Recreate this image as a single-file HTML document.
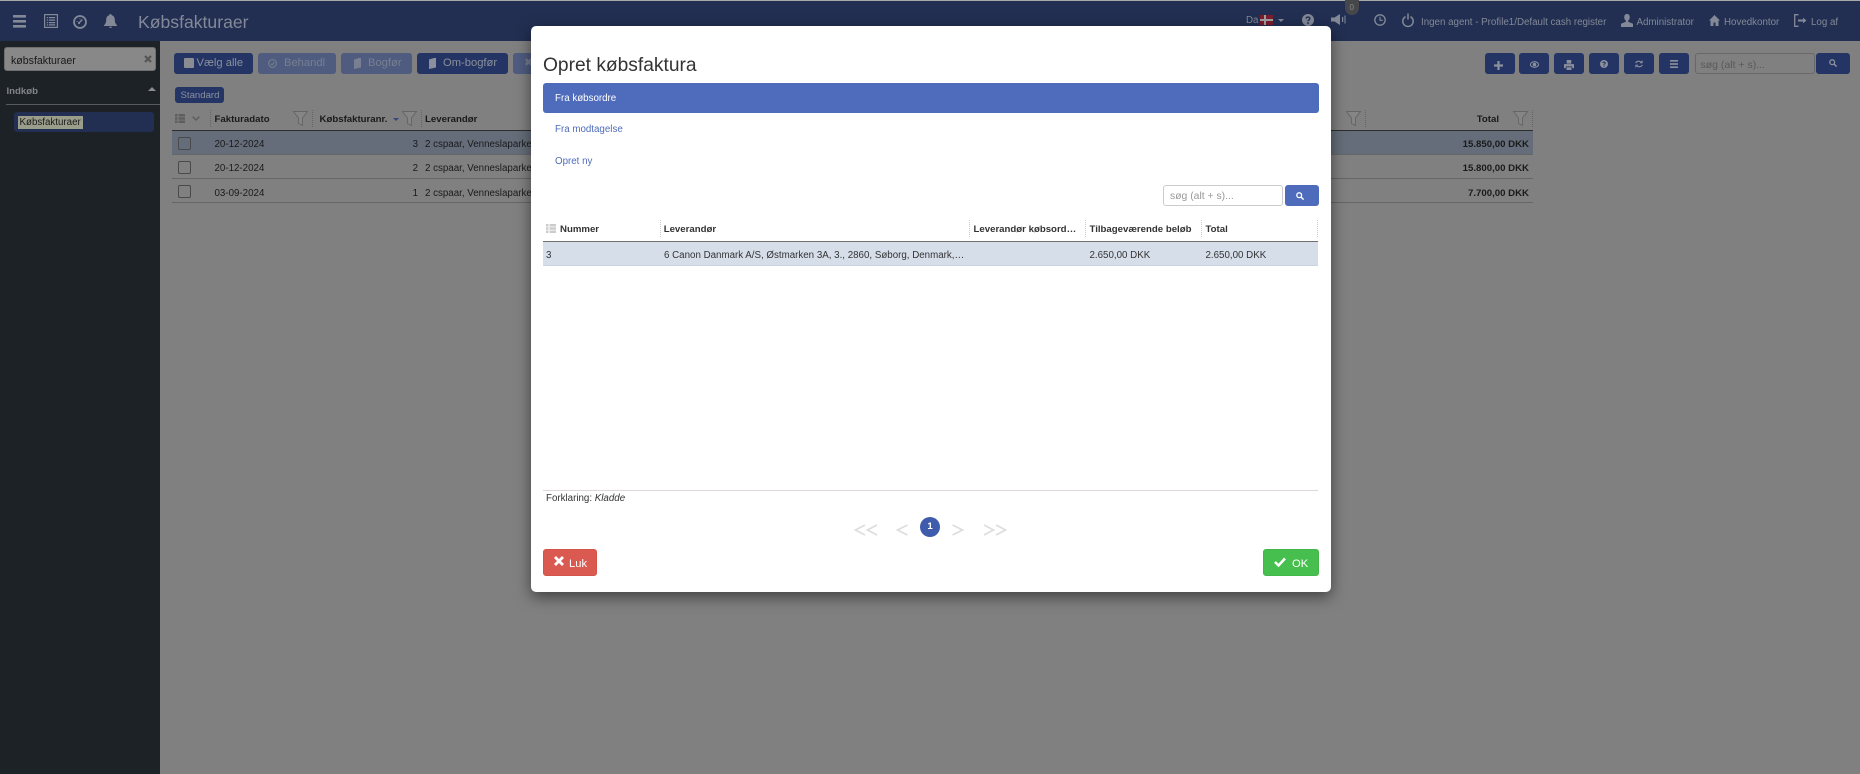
<!DOCTYPE html>
<html lang="da"><head><meta charset="utf-8"><title>Købsfakturaer</title>
<style>
html,body{margin:0;padding:0;width:1860px;height:774px;overflow:hidden;background:#808080;font-family:"Liberation Sans",Arial,sans-serif;color:#1a1a1a}
*{box-sizing:border-box}
.a{position:absolute}
.t{position:absolute;white-space:nowrap;line-height:16px;font-size:9.75px;margin-top:1px}
.b{font-weight:bold;font-size:9.65px}
.nt{color:#838997}
.btn{position:absolute;top:53px;height:21px;background:#243565;border-radius:3px;color:#8b909c;font-size:11.2px;line-height:20px;white-space:nowrap}
.dis{background:#4f5c80;color:#787f91}
.div{position:absolute;width:0;border-left:1px dotted #666}
.mdiv{position:absolute;width:0;border-left:1px dotted #ccc;top:220px;height:17px}
.rl{position:absolute;left:172px;width:1361px;height:1px;background:#666}
.cb{position:absolute;left:178px;width:13px;height:13px;border:1px solid #4a4a4a;border-radius:2px;background:#808080}
svg{position:absolute;overflow:visible}
</style></head><body>
<!-- top bar -->
<div class="a" style="left:0;top:0;width:1860px;height:1px;background:#a8a8a8"></div>
<div class="a" style="left:0;top:1px;width:1860px;height:40px;background:#222f52"></div>
<!-- sidebar -->
<div class="a" style="left:0;top:41px;width:160px;height:733px;background:#1c2226"></div>

<!-- nav left icons -->
<svg style="left:13px;top:15px" width="13" height="13" viewBox="0 0 13 13" fill="#838997"><rect width="13" height="2.6" rx=".6"/><rect y="5" width="13" height="2.6" rx=".6"/><rect y="10" width="13" height="2.6" rx=".6"/></svg>
<svg style="left:44px;top:14px" width="14" height="14" viewBox="0 0 14 14"><path fill="#838997" d="M0 0h14v14H0z"/><path fill="#222f52" d="M1.2 1.200h11.600v11.600H1.200z"/><path fill="#838997" d="M2.800 3h1.400v1.300H2.800zM5 3h6.200v1.300H5zM2.800 5.500h1.400v1.300H2.800zM5 5.500h6.200v1.300H5zM2.800 8h1.400v1.300H2.800zM5 8h6.200v1.300H5zM2.800 10.300h1.400v1.200H2.800zM5 10.300h6.200v1.200H5z"/></svg>
<svg style="left:73px;top:15px" width="14" height="14" viewBox="0 0 14 14" fill="none"><circle cx="7" cy="7" r="6" stroke="#838997" stroke-width="1.800"/><path d="M6 8L9.300 4.500" stroke="#838997" stroke-width="1.400"/><circle cx="6" cy="8" r="1.100" fill="#838997"/><path d="M3.500 6.500h1M7 3.300v1" stroke="#838997" stroke-width=".9"/></svg>
<svg style="left:104px;top:14px" width="13" height="14" viewBox="0 0 13 14"><path fill="#838997" d="M6.500 0C7.300 0 7.700.5 7.700 1.200 10 1.800 10.800 3.600 10.800 6c0 2.500.8 3.900 2.200 5.200v.8H0v-.8C1.400 9.900 2.200 8.500 2.200 6c0-2.400.8-4.200 3.100-4.800C5.300.5 5.700 0 6.500 0zM5 12.800h3c0 .8-.7 1.200-1.500 1.200S5 13.600 5 12.800z"/></svg>
<div class="t nt" style="left:138px;top:11px;font-size:17.6px;line-height:20px">Købsfakturaer</div>

<!-- nav right -->
<div class="t nt" style="left:1246px;top:12px">Da</div>
<div class="a" style="left:1260px;top:15px;width:13px;height:10px;background:#7c1d2c"></div>
<div class="a" style="left:1264px;top:15px;width:2px;height:10px;background:#a0a0a4"></div>
<div class="a" style="left:1260px;top:19px;width:13px;height:2px;background:#a0a0a4"></div>
<svg style="left:1278px;top:19px" width="6" height="3" viewBox="0 0 6 3"><path fill="#838997" d="M0 0h6L3 3z"/></svg>
<svg style="left:1302px;top:14px" width="12" height="12" viewBox="0 0 12 12"><circle cx="6" cy="6" r="6" fill="#838997"/><path d="M4.200 4.600C4.200 2.600 7.900 2.600 7.900 4.600 7.900 6 6 5.800 6 7.300" fill="none" stroke="#222f52" stroke-width="1.400"/><rect x="5.200" y="8.300" width="1.600" height="1.600" fill="#222f52"/></svg>
<svg style="left:1331px;top:14px" width="15" height="11" viewBox="0 0 15 11"><path fill="#838997" d="M0 3.500h3.500L9 0v11L3.500 7.500H0z"/><path fill="#838997" d="M11 3h1.200v5H11zM13.500 1.500h1v8h-1z"/></svg>
<div class="a" style="left:1345px;top:0;width:14px;height:15px;border-radius:0 0 7px 7px;background:#46474b"></div>
<div class="t" style="left:1349.500px;top:-1px;color:#8a8a8a;font-size:8px">0</div>
<svg style="left:1374px;top:14px" width="12" height="12" viewBox="0 0 12 12" fill="none" stroke="#838997"><circle cx="6" cy="6" r="5.200" stroke-width="1.300"/><path d="M6 2.800V6.300H8.800" stroke-width="1.100"/></svg>
<svg style="left:1402px;top:13px" width="12" height="14" viewBox="0 0 12 14" fill="none" stroke="#838997" stroke-width="1.500"><path d="M3.500 3.700A5.200 5.200 0 1 0 8.500 3.700"/><path d="M6 .5V6.500"/></svg>
<div class="t nt" style="left:1421px;top:14px">Ingen agent - Profile1/Default cash register</div>
<svg style="left:1621px;top:14px" width="12" height="13" viewBox="0 0 13 14"><path fill="#838997" d="M6.500 0C8.500 0 9.500 1.400 9.500 3.500 9.500 5.200 8.700 6.600 7.700 7.300v1L13 10.500V14H0v-3.500l5.300-2.200v-1C4.300 6.600 3.500 5.200 3.500 3.500 3.500 1.400 4.500 0 6.500 0z"/></svg>
<div class="t nt" style="left:1636.500px;top:14px">Administrator</div>
<svg style="left:1709px;top:15px" width="11" height="11" viewBox="0 0 11 11"><path fill="#838997" d="M5.500 0L11 5.500H9.500V11H6.500V7.500H4.500V11H1.500V5.500H0z"/></svg>
<div class="t nt" style="left:1724px;top:14px">Hovedkontor</div>
<svg style="left:1794px;top:14px" width="13" height="13" viewBox="0 0 13 13" fill="none" stroke="#838997" stroke-width="1.300"><path d="M4.500.7H.7V12.300H4.500"/><path d="M4 6.500H9.500" stroke-width="2"/><path fill="#838997" stroke="none" d="M9 3.800L12.500 6.500 9 9.200z"/></svg>
<div class="t nt" style="left:1811px;top:14px">Log af</div>

<!-- sidebar content -->
<div class="a" style="left:4px;top:47px;width:152px;height:24px;background:#888;border:1px solid #6f6f6f;border-radius:3px"></div>
<div class="t" style="left:11px;top:51.500px;font-size:10.600px">købsfakturaer</div>
<svg style="left:144px;top:55px" width="8" height="8" viewBox="0 0 8 8"><path d="M1 1L7 7M7 1L1 7" stroke="#555" stroke-width="2.200"/></svg>
<div class="t b" style="left:6.500px;top:82.500px;color:#838486">Indkøb</div>
<svg style="left:148px;top:87px" width="8" height="4" viewBox="0 0 8 4"><path fill="#8d8d8d" d="M4 0l4 4H0z"/></svg>
<div class="a" style="left:6px;top:104px;width:154px;height:1px;background:#585a5c"></div>
<div class="a" style="left:14px;top:112px;width:140px;height:20px;background:#222f52;border-radius:3px"></div>
<div class="a" style="left:18px;top:116px;width:65px;height:13px;background:#9b9d8b"></div>
<div class="t" style="left:19.500px;top:113.500px">Købsfakturaer</div>

<!-- left toolbar -->
<div class="btn" style="left:174px;width:79px"><span class="a" style="left:10px;top:5px;width:10px;height:10px;background:#8b8c92;border-radius:1px"></span><span class="a" style="left:22.500px;top:0">Vælg alle</span></div>
<div class="btn dis" style="left:258px;width:78px"><svg style="left:10px;top:6px" width="9" height="9" viewBox="0 0 9 9" fill="none" stroke="#787f91"><circle cx="4.500" cy="4.500" r="3.900"/><path d="M2.600 4.600L4 6 6.400 3.200"/></svg><span class="a" style="left:26px;top:0">Behandl</span></div>
<div class="btn dis" style="left:341px;width:71px"><svg style="left:12px;top:5px" width="8" height="11" viewBox="0 0 8 11"><path fill="#787f91" d="M1 1.500L6 0h2v9.500L1 11z"/></svg><span class="a" style="left:27px;top:0">Bogfør</span></div>
<div class="btn" style="left:417px;width:91px"><svg style="left:11px;top:5px" width="8" height="11" viewBox="0 0 8 11"><path fill="#8b909c" d="M1 1.500L6 0h2v9.500L1 11z"/></svg><span class="a" style="left:26px;top:0">Om-bogfør</span></div>
<div class="btn dis" style="left:513px;width:40px"><span class="a" style="left:11px;top:0">✖</span></div>

<div class="a" style="left:175px;top:87px;width:49px;height:16px;background:#243565;border-radius:3px"></div>
<div class="t" style="left:180.500px;top:87px;color:#8b909c;font-size:9.600px">Standard</div>

<!-- right toolbar -->
<div class="btn" style="left:1484.500px;width:30px"><svg style="left:9.500px;top:8px" width="9" height="9" viewBox="0 0 9 9"><path fill="#8b909c" d="M3.400 0h2.200v3.400H9v2.200H5.600V9H3.400V5.600H0V3.400h3.400z"/></svg></div>
<div class="btn" style="left:1519px;width:30px"><svg style="left:10.500px;top:8px" width="9" height="7" viewBox="0 0 11 8"><ellipse cx="5.500" cy="4" rx="5" ry="3.400" fill="none" stroke="#8b909c" stroke-width="1.300"/><circle cx="5.500" cy="4" r="2.200" fill="#8b909c"/></svg></div>
<div class="btn" style="left:1554px;width:30px"><svg style="left:10px;top:7px" width="10" height="10" viewBox="0 0 11 11"><path fill="#8b909c" d="M3 0h5v4H3zM0 4.500h11V9H9V7H2v2H0zM2.800 8h5.400v3H2.800z"/></svg></div>
<div class="btn" style="left:1589px;width:30px"><svg style="left:11px;top:7px" width="8" height="8" viewBox="0 0 10 10"><circle cx="5" cy="5" r="5" fill="#8b909c"/><path d="M3.500 3.800C3.500 2.200 6.500 2.200 6.500 3.800 6.500 5 5 4.800 5 6" fill="none" stroke="#243565" stroke-width="1.300"/><rect x="4.300" y="6.800" width="1.400" height="1.400" fill="#243565"/></svg></div>
<div class="btn" style="left:1624px;width:30px"><svg style="left:11px;top:6px" width="8" height="10" viewBox="0 0 10 12" fill="none" stroke="#8b909c" stroke-width="1.400"><path d="M1 5C1.500 2.500 5.500 1.500 8 4"/><path d="M9 7C8.500 9.500 4.500 10.500 2 8"/><path fill="#8b909c" stroke="none" d="M9.500 1.200V5H5.800zM.5 10.800V7H4.200z"/></svg></div>
<div class="btn" style="left:1659px;width:30px"><svg style="left:11px;top:7px" width="8" height="8" viewBox="0 0 10 10" fill="#8b909c"><rect width="10" height="2"/><rect y="4" width="10" height="2"/><rect y="8" width="10" height="2"/></svg></div>
<div class="a" style="left:1694.500px;top:53px;width:120px;height:21px;background:#808080;border:1px solid #686868;border-radius:3px"></div>
<div class="t" style="left:1700.500px;top:55.500px;font-size:10.500px;color:#595959">søg (alt + s)...</div>
<div class="btn" style="left:1816px;width:34px"><svg style="left:13px;top:6px" width="8" height="8" viewBox="0 0 10 10" fill="none" stroke="#8b909c" stroke-width="1.600"><circle cx="4" cy="4" r="3"/><path d="M6.300 6.300L9.500 9.500" stroke-width="1.900"/></svg></div>

<!-- main table -->
<svg style="left:175px;top:114px" width="10" height="9" viewBox="0 0 10 9" fill="#5e5e5e"><path d="M0 0h2.500v2.500H0zM3.500 0H10v2.500H3.500zM0 3.300h2.500v2.500H0zM3.500 3.300H10v2.500H3.500zM0 6.500h2.500V9H0zM3.500 6.500H10V9H3.500z"/></svg>
<svg style="left:192px;top:116px" width="8" height="5" viewBox="0 0 8 5"><path d="M.7.700L4 4 7.300.7" fill="none" stroke="#5e5e5e" stroke-width="1.500"/></svg>
<div class="div" style="left:210px;top:110px;height:17px"></div>
<div class="t b" style="left:214.500px;top:110.500px">Fakturadato</div>
<svg style="left:293px;top:111px" width="15" height="15" viewBox="0 0 15 15"><path d="M.5.500h14L9.500 7v7.500l-4-2V7z" fill="#858585" stroke="#666"/></svg>
<div class="div" style="left:311.500px;top:110px;height:17px"></div>
<div class="t b" style="left:319.500px;top:110.500px">Købsfakturanr.</div>
<svg style="left:392.500px;top:118px" width="6" height="3" viewBox="0 0 6 3"><path fill="#34477c" d="M0 0h6L3 3z"/></svg>
<svg style="left:402px;top:111px" width="15" height="15" viewBox="0 0 15 15"><path d="M.5.500h14L9.500 7v7.500l-4-2V7z" fill="#858585" stroke="#666"/></svg>
<div class="div" style="left:421px;top:110px;height:17px"></div>
<div class="t b" style="left:425px;top:110.500px">Leverandør</div>
<svg style="left:1345.500px;top:111px" width="15" height="15" viewBox="0 0 15 15"><path d="M.5.500h14L9.500 7v7.500l-4-2V7z" fill="#858585" stroke="#666"/></svg>
<div class="div" style="left:1365px;top:110px;height:17px"></div>
<div class="t b" style="right:361px;top:110.500px">Total</div>
<svg style="left:1513px;top:111px" width="15" height="15" viewBox="0 0 15 15"><path d="M.5.500h14L9.500 7v7.500l-4-2V7z" fill="#858585" stroke="#666"/></svg>
<div class="div" style="left:1532px;top:110px;height:17px"></div>
<div class="a" style="left:172px;top:130px;width:1361px;height:1px;background:#2e2e2e"></div>
<div class="a" style="left:172px;top:131px;width:1361px;height:23px;background:#656d7a"></div>
<div class="rl" style="top:154px"></div><div class="rl" style="top:178px"></div><div class="rl" style="top:202px"></div>
<div class="cb" style="top:137px;background:#656d7a"></div><div class="cb" style="top:161px"></div><div class="cb" style="top:185px"></div>
<div class="t" style="left:214.500px;top:136px">20-12-2024</div>
<div class="t" style="left:214.500px;top:160px">20-12-2024</div>
<div class="t" style="left:214.500px;top:184.500px">03-09-2024</div>
<div class="t" style="right:1442px;top:136px">3</div>
<div class="t" style="right:1442px;top:160px">2</div>
<div class="t" style="right:1442px;top:184.500px">1</div>
<div class="t" style="left:425px;top:136px">2 cspaar, Venneslaparken</div>
<div class="t" style="left:425px;top:160px">2 cspaar, Venneslaparken</div>
<div class="t" style="left:425px;top:184.500px">2 cspaar, Venneslaparken</div>
<div class="t b" style="right:331px;top:136px">15.850,00 DKK</div>
<div class="t b" style="right:331px;top:160px">15.800,00 DKK</div>
<div class="t b" style="right:331px;top:184.500px">7.700,00 DKK</div>

<!-- modal -->
<div class="a" style="left:531px;top:26px;width:800px;height:566px;background:#fff;border-radius:5px;box-shadow:0 5px 15px rgba(0,0,0,.5)"></div>
<div class="t" style="left:543px;top:52.500px;font-size:19.200px;line-height:24px;color:#333">Opret købsfaktura</div>
<div class="a" style="left:543px;top:83px;width:776px;height:30px;background:#4e6cbb;border-radius:3px"></div>
<div class="t" style="left:555px;top:90px;color:#fff">Fra købsordre</div>
<div class="t" style="left:555px;top:121px;color:#4e6cbb">Fra modtagelse</div>
<div class="t" style="left:555px;top:152.500px;color:#4e6cbb">Opret ny</div>
<div class="a" style="left:1163px;top:185px;width:120px;height:21px;border:1px solid #ccc;border-radius:3px;background:#fff"></div>
<div class="t" style="left:1170px;top:187.500px;font-size:10.400px;color:#999">søg (alt + s)...</div>
<div class="a" style="left:1285px;top:185px;width:34px;height:21px;background:#4e6cbb;border-radius:3px"></div>
<svg style="left:1296px;top:192px" width="8" height="8" viewBox="0 0 10 10" fill="none" stroke="#fff" stroke-width="1.600"><circle cx="4" cy="4" r="3"/><path d="M6.300 6.300L9.500 9.500" stroke-width="1.900"/></svg>

<svg style="left:546px;top:224px" width="10" height="9" viewBox="0 0 10 9" fill="#ccc"><path d="M0 0h2.500v2.500H0zM3.500 0H10v2.500H3.500zM0 3.300h2.500v2.500H0zM3.500 3.300H10v2.500H3.500zM0 6.500h2.500V9H0zM3.500 6.500H10V9H3.500z"/></svg>
<div class="t b" style="left:560px;top:221px;color:#333">Nummer</div>
<div class="mdiv" style="left:660px"></div>
<div class="t b" style="left:663.700px;top:221px;color:#333">Leverandør</div>
<div class="mdiv" style="left:969px"></div>
<div class="t b" style="left:973.500px;top:221px;color:#333">Leverandør købsord…</div>
<div class="mdiv" style="left:1085px"></div>
<div class="t b" style="left:1089.500px;top:221px;color:#333">Tilbageværende beløb</div>
<div class="mdiv" style="left:1201px"></div>
<div class="t b" style="left:1205.500px;top:221px;color:#333">Total</div>
<div class="mdiv" style="left:1317px"></div>
<div class="a" style="left:543px;top:241px;width:775px;height:1px;background:#707070"></div>
<div class="a" style="left:543px;top:242px;width:775px;height:24px;background:#d6deea;border-bottom:1px solid #cdd3dc"></div>
<div class="t" style="left:546px;top:246.500px;color:#333">3</div>
<div class="t" style="left:664px;top:246.500px;color:#333">6 Canon Danmark A/S, Østmarken 3A, 3., 2860, Søborg, Denmark,…</div>
<div class="t" style="left:1089.500px;top:246.500px;color:#333">2.650,00 DKK</div>
<div class="t" style="left:1205.500px;top:246.500px;color:#333">2.650,00 DKK</div>

<div class="a" style="left:543px;top:490px;width:775px;height:1px;background:#e0d5da"></div>
<div class="t" style="left:546px;top:489.500px;color:#333">Forklaring: <i>Kladde</i></div>

<svg style="left:854px;top:524px" width="24" height="12" viewBox="0 0 24 12" fill="none" stroke="#ddd" stroke-width="1.700"><path d="M11 1L1.500 6 11 11M23 1L13.500 6 23 11"/></svg>
<svg style="left:896px;top:524px" width="12" height="12" viewBox="0 0 12 12" fill="none" stroke="#ddd" stroke-width="1.700"><path d="M11.500 1L1.500 6 11.500 11"/></svg>
<div class="a" style="left:920px;top:517px;width:20px;height:20px;border-radius:50%;background:#3f5bab"></div>
<div class="t b" style="left:920px;top:518px;width:20px;text-align:center;color:#fff">1</div>
<svg style="left:952px;top:524px" width="12" height="12" viewBox="0 0 12 12" fill="none" stroke="#ddd" stroke-width="1.700"><path d="M.5 1L10.500 6 .5 11"/></svg>
<svg style="left:983px;top:524px" width="24" height="12" viewBox="0 0 24 12" fill="none" stroke="#ddd" stroke-width="1.700"><path d="M1 1L10.500 6 1 11M13 1L22.500 6 13 11"/></svg>

<div class="a" style="left:543px;top:549px;width:54px;height:27px;background:#da5a52;border-radius:3px;border:1px solid #d4534b"></div>
<svg style="left:554px;top:556px" width="10" height="10" viewBox="0 0 10 10"><path d="M1 1L9 9M9 1L1 9" stroke="#fff" stroke-width="2.800"/></svg>
<div class="t" style="left:569px;top:554.500px;font-size:11.200px;color:#fff">Luk</div>
<div class="a" style="left:1263px;top:549px;width:56px;height:27px;background:#47bf4e;border-radius:3px;border:1px solid #42b649"></div>
<svg style="left:1274px;top:557px" width="12" height="10" viewBox="0 0 12 10"><path d="M1 5L4.500 8.500 11 1.500" fill="none" stroke="#fff" stroke-width="2.500"/></svg>
<div class="t" style="left:1292px;top:554.500px;font-size:11.200px;color:#fff">OK</div>
</body></html>
